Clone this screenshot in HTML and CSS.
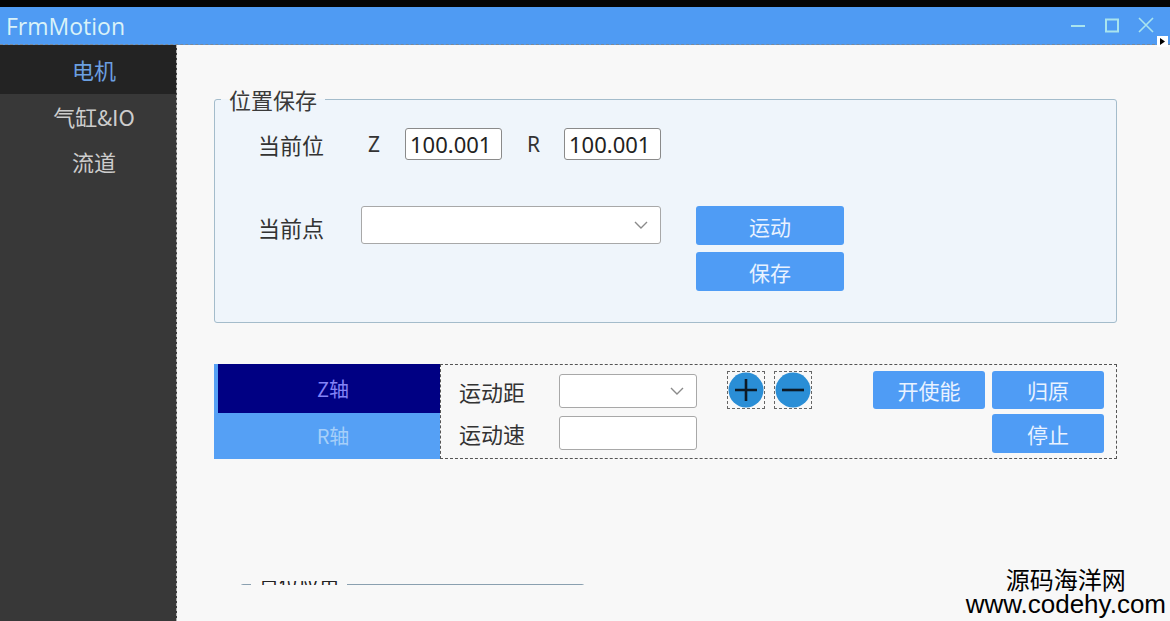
FILE: index.html
```html
<html lang="zh-CN"><head>
    <meta charset="UTF-8">
    <title>FrmMotion</title>
    <link rel="stylesheet" href="styles.css">
</head>
<body>
    <div class="topbar"></div>
    <div class="titlebar">
        <span class="title">FrmMotion</span>
        <div class="win-buttons">
            <svg width="34" height="38" viewBox="0 0 34 38"><line x1="10" y1="19" x2="24" y2="19" stroke="#a9e4ee" stroke-width="2"/></svg>
            <svg width="34" height="38" viewBox="0 0 34 38"><rect x="11" y="12.5" width="12" height="12" fill="none" stroke="#a9e4ee" stroke-width="2"/></svg>
            <svg width="34" height="38" viewBox="0 0 34 38"><path d="M10 11 L24 25 M24 11 L10 25" stroke="#a9e4ee" stroke-width="1.6"/></svg>
        </div>
        <div class="more-arrow"><svg width="9" height="9" viewBox="0 0 9 9"><path d="M2 1 L7 4.5 L2 8 Z" fill="#000"/></svg></div>
    </div>

    <div class="window">
        <div class="sidebar">
            <div class="nav-item active">电机</div>
            <div class="nav-item">气缸&amp;IO</div>
            <div class="nav-item">流道</div>
        </div>

        <div class="main">
            <fieldset class="group">
                <legend>位置保存</legend>
                <div class="pos-row">
                    <span class="label">当前位</span>
                    <span class="axis">Z</span>
                    <input class="num" type="text" value="100.001">
                    <span class="axis axis-r">R</span>
                    <input class="num" type="text" value="100.001">
                </div>
                <div class="point-row">
                    <span class="label label-point">当前点</span>
                    <div class="combo combo-wide">
                        <svg width="14" height="10" viewBox="0 0 14 10"><path d="M1 2 L7 8 L13 2" fill="none" stroke="#8a8a8a" stroke-width="1.4"/></svg>
                    </div>
                    <div class="btn-col">
                        <button class="btn btn-big">运动</button>
                        <button class="btn btn-big">保存</button>
                    </div>
                </div>
            </fieldset>

            <div class="axis-panel">
                <div class="tabs">
                    <div class="tab tab-active">Z轴</div>
                    <div class="tab">R轴</div>
                </div>
                <div class="axis-content">
                    <div class="form-col">
                        <div class="form-row">
                            <span class="label label-small">运动距</span>
                            <div class="combo combo-small">
                                <svg width="14" height="10" viewBox="0 0 14 10"><path d="M1 2 L7 8 L13 2" fill="none" stroke="#8a8a8a" stroke-width="1.4"/></svg>
                            </div>
                        </div>
                        <div class="form-row">
                            <span class="label label-small">运动速</span>
                            <input class="speed" type="text">
                        </div>
                    </div>
                    <div class="jog">
                        <div class="jog-btn">
                            <svg width="36" height="36" viewBox="0 0 36 36"><circle cx="18" cy="18" r="17.5" fill="#2a8ed6"/><path d="M18 7 V29 M7 18 H29" stroke="#0d1a26" stroke-width="2.6"/></svg>
                        </div>
                        <div class="jog-btn">
                            <svg width="36" height="36" viewBox="0 0 36 36"><circle cx="18" cy="18" r="17.5" fill="#2a8ed6"/><path d="M7 18 H29" stroke="#0d1a26" stroke-width="2.6"/></svg>
                        </div>
                    </div>
                    <div class="ctrl-grid">
                        <button class="btn">开使能</button>
                        <button class="btn">归原</button>
                        <button class="btn btn-stop">停止</button>
                    </div>
                </div>
            </div>

            <div class="clip">
                <fieldset class="group group-clipped">
                    <legend>点位应用</legend>
                </fieldset>
            </div>
        </div>
    </div>

    <div class="watermark">
        <div class="wm-cn">源码海洋网</div>
        <div class="wm-url">www.codehy.com</div>
    </div>
</body></html>
```

FILE: styles.css
```css
body {
    margin: 0;
    width: 1170px;
    height: 621px;
    overflow: hidden;
    background-color: #f8f8f8;
    font-family: "Noto Sans CJK SC", "Noto Sans", sans-serif;
    color: #333;
    position: relative;
}

.topbar {
    height: 7px;
    background-color: #050505;
}

.titlebar {
    height: 37px;
    background-color: #4f9bf3;
    border-bottom: 1px dashed #7a8a9a;
    display: flex;
    align-items: center;
    position: relative;
}

.title {
    font-family: "Open Sans", "Noto Sans", sans-serif;
    font-size: 23px;
    color: #d9f2f8;
    margin-left: 6px;
    flex: 1;
}

.win-buttons {
    display: flex;
    margin-right: 7px;
}

.more-arrow {
    position: absolute;
    right: 2px;
    bottom: -3px;
    width: 11px;
    height: 11px;
    background-color: #fff;
    display: flex;
    align-items: center;
    justify-content: center;
}

.window {
    display: flex;
    height: 576px;
}

.sidebar {
    width: 176px;
    background-color: #383838;
    border-right: 1px dashed #b0b0b0;
}

.nav-item {
    height: 45px;
    line-height: 45px;
    text-align: center;
    font-size: 22px;
    color: #cdcdcd;
    padding-left: 12px;
}

.nav-item.active {
    height: 49px;
    line-height: 49px;
    background-color: #232323;
    color: #6b9fe0;
}

.main {
    flex: 1;
    padding-left: 37px;
}

/* 位置保存 */
.group {
    margin: 38px 0 0 0;
    width: 903px;
    box-sizing: border-box;
    border: 1px solid #a4bccb;
    border-radius: 3px;
    background-color: #eff5fb;
    padding: 0 0 31px 0;
}

.group legend {
    margin-left: 6px;
    padding: 0 8px 0 8px;
    font-size: 22px;
    line-height: 32px;
    color: #3a3a3a;
}

.label {
    font-size: 22px;
    color: #333;
}

.pos-row {
    display: flex;
    align-items: center;
    height: 32px;
    margin-top: 13px;
    padding-left: 43px;
}

.pos-row .label {
    width: 110px;
}

.axis {
    width: 37px;
    font-family: "Noto Sans", sans-serif;
    font-size: 21px;
}

.axis-r {
    margin-left: 25px;
}

.num {
    width: 97px;
    height: 32px;
    box-sizing: border-box;
    border: 1px solid #8a8a8a;
    border-radius: 3px;
    background-color: #fff;
    font-family: "Noto Sans", sans-serif;
    font-size: 22px;
    color: #222;
    padding: 0 4px;
}

.point-row {
    display: flex;
    align-items: flex-start;
    margin-top: 46px;
    padding-left: 43px;
}

.label-point {
    width: 103px;
    line-height: 42px;
}

.combo {
    box-sizing: border-box;
    border: 1px solid #a8a8a8;
    border-radius: 3px;
    background-color: #fff;
    display: flex;
    align-items: center;
    justify-content: flex-end;
    padding-right: 12px;
}

.combo-wide {
    width: 300px;
    height: 38px;
}

.btn-col {
    display: flex;
    flex-direction: column;
    gap: 7px;
    margin-left: 35px;
}

.btn {
    border: none;
    border-radius: 3px;
    background-color: #4f9cf5;
    color: #e9f2ff;
    font-family: "Noto Sans CJK SC", sans-serif;
    font-size: 21px;
    width: 112px;
    height: 38px;
    padding: 0;
}

.btn-big {
    width: 148px;
    height: 39px;
}

/* 轴 */
.axis-panel {
    display: flex;
    width: 903px;
    height: 95px;
    margin-top: 41px;
}

.tabs {
    width: 226px;
}

.tab {
    height: 46px;
    line-height: 46px;
    text-align: center;
    background-color: #55a0f5;
    color: #a6cff9;
    font-size: 20px;
    padding-left: 12px;
}

.tab-active {
    height: 49px;
    line-height: 49px;
    background-color: #000083;
    color: #8383f6;
    border-left: 4px solid #55a0f5;
    padding-left: 8px;
}

.axis-content {
    flex: 1;
    border: 1px dashed #555;
    display: flex;
    align-items: flex-start;
    padding: 6px 12px 0 18px;
}

.form-col {
    display: flex;
    flex-direction: column;
    gap: 8px;
    margin-top: 3px;
}

.form-row {
    display: flex;
    align-items: center;
}

.label-small {
    width: 100px;
}

.combo-small {
    width: 138px;
    height: 34px;
}

.speed {
    width: 138px;
    height: 34px;
    box-sizing: border-box;
    border: 1px solid #a8a8a8;
    border-radius: 3px;
    background-color: #fff;
}

.jog {
    display: flex;
    gap: 9px;
    margin-left: 30px;
}

.jog-btn {
    width: 38px;
    height: 38px;
    box-sizing: border-box;
    border: 1px dashed #666;
    display: flex;
    align-items: center;
    justify-content: center;
}

.ctrl-grid {
    margin-left: auto;
    display: grid;
    grid-template-columns: 112px 112px;
    gap: 5px 7px;
}

.btn-stop {
    grid-column: 2;
    height: 39px;
}

/* 被遮住的分组 */
.clip {
    height: 4px;
    overflow: hidden;
    margin-top: 122px;
    margin-left: 26px;
}

.group-clipped {
    width: 345px;
    height: 60px;
    margin-top: -13px;
    background-color: transparent;
    border-color: #8aa0b0;
}

.group-clipped legend {
    font-size: 20px;
    margin-left: 10px;
    color: #222;
}

.watermark {
    position: absolute;
    right: 4px;
    bottom: 5px;
    text-align: center;
    color: #000;
}

.wm-cn {
    font-size: 24px;
    line-height: 26px;
}

.wm-url {
    font-family: "Liberation Sans", sans-serif;
    font-size: 26px;
    line-height: 24px;
}
```
